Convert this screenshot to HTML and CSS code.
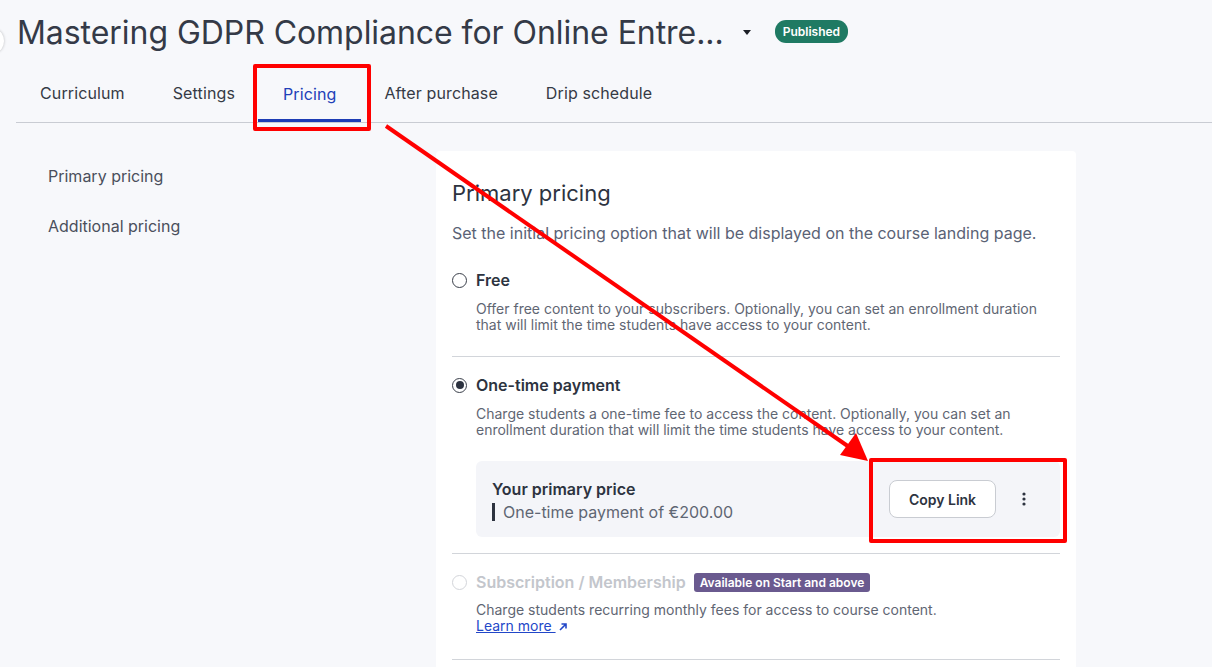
FILE: index.html
```html
<!DOCTYPE html>
<html lang="en">
<head>
  <meta charset="UTF-8">
  <meta name="viewport" content="width=device-width, initial-scale=1.0">
  <title>Pricing</title>
  <link rel="stylesheet" href="styles.css">
</head>
<body>
  <div class="side-toggle"></div>

  <div class="page-header">
    <h1 class="course-title">Mastering GDPR Compliance for Online Entre...</h1>
    <span class="caret"></span>
    <span class="status-badge">Published</span>
  </div>

  <nav class="tabs">
    <a class="tab">Curriculum</a>
    <a class="tab">Settings</a>
    <a class="tab active">Pricing</a>
    <a class="tab">After purchase</a>
    <a class="tab">Drip schedule</a>
  </nav>

  <div class="layout">
    <aside class="side-nav">
      <a class="side-link">Primary pricing</a>
      <a class="side-link">Additional pricing</a>
    </aside>

    <section class="card">
      <h2 class="card-title">Primary pricing</h2>
      <p class="card-subtitle">Set the initial pricing option that will be displayed on the course landing page.</p>

      <div class="option">
        <label class="option-label">
          <span class="radio"></span>
          <span>Free</span>
        </label>
        <p class="option-desc">Offer free content to your subscribers. Optionally, you can set an enrollment duration that will limit the time students have access to your content.</p>
      </div>

      <div class="option">
        <label class="option-label">
          <span class="radio checked"></span>
          <span>One-time payment</span>
        </label>
        <p class="option-desc">Charge students a one-time fee to access the content. Optionally, you can set an enrollment duration that will limit the time students have access to your content.</p>
        <div class="price-box">
          <div class="price-info">
            <div class="price-title">Your primary price</div>
            <div class="price-value">One-time payment of €200.00</div>
          </div>
          <button class="copy-btn">Copy Link</button>
          <span class="kebab">
            <svg width="4" height="14" viewBox="0 0 4 14"><circle cx="2" cy="2" r="1.6" fill="#2d3340"/><circle cx="2" cy="7" r="1.6" fill="#2d3340"/><circle cx="2" cy="12" r="1.6" fill="#2d3340"/></svg>
          </span>
        </div>
      </div>

      <div class="option">
        <label class="option-label disabled">
          <span class="radio"></span>
          <span>Subscription / Membership</span>
          <span class="plan-badge">Available on Start and above</span>
        </label>
        <p class="option-desc">Charge students recurring monthly fees for access to course content.<br>
          <a class="learn-more">Learn more </a><svg class="ext" width="10" height="10" viewBox="0 0 10 10"><path d="M2 8 L8 2 M3.5 2 H8 V6.5" stroke="#2247c8" stroke-width="1.6" fill="none"/></svg>
        </p>
      </div>
    </section>
  </div>

  <!-- annotation overlay -->
  <div class="mark mark-tab"></div>
  <div class="mark mark-copy"></div>
  <svg class="arrow" width="1212" height="667" viewBox="0 0 1212 667">
    <line x1="386" y1="126" x2="852" y2="449" stroke="#ff0000" stroke-width="4"/>
    <polygon points="868,461 840,455 856,433" fill="#ff0000"/>
  </svg>
</body>
</html>
```

FILE: styles.css
```css
body {
  margin: 0;
  font-family: Inter, "Noto Sans", sans-serif;
  background-color: #f7f8fb;
  color: #2d3340;
  height: 667px;
  overflow: hidden;
  position: relative;
}
.side-toggle {
  position: absolute;
  left: -12px;
  top: 30px;
  width: 16px;
  height: 22px;
  border-radius: 50%;
  background: #fff;
  box-shadow: 0 0 3px rgba(0, 0, 0, 0.25);
}
.page-header {
  display: flex;
  align-items: center;
  height: 64px;
  padding-left: 17px;
}
.course-title {
  margin: 0;
  font-size: 32px;
  font-weight: 400;
  color: #343a47;
  letter-spacing: -0.05px;
}
.caret {
  margin-left: 19px;
  width: 0;
  height: 0;
  border-left: 4px solid transparent;
  border-right: 4px solid transparent;
  border-top: 5px solid #1c1f26;
}
.status-badge {
  margin-left: 24px;
  background: #1f7a63;
  color: #fff;
  font-size: 12px;
  font-weight: 600;
  padding: 4px 8px;
  border-radius: 11px;
  margin-top: -2px;
}
.tabs {
  display: flex;
  margin-left: 16px;
  border-bottom: 1px solid #c9ccd3;
  height: 58px;
}
.tab {
  padding: 0 24px 0;
  font-size: 16px;
  letter-spacing: 0.12px;
  color: #353a45;
  display: flex;
  align-items: center;
  box-sizing: border-box;
}
.tab.active {
  color: #2140b8;
  border-bottom: 3px solid #1d3db5;
  padding: 4px 25px 0;
  margin: 0 -1px;
}
.layout {
  display: flex;
  padding-top: 28px;
}
.side-nav {
  width: 388px;
  padding-left: 48px;
  display: flex;
  flex-direction: column;
}
.side-link {
  font-size: 16px;
  color: #4a4f5c;
  height: 50px;
  line-height: 50px;
}
.card {
  width: 608px;
  background: #fff;
  border-radius: 4px;
  padding: 27px 16px 0;
  height: 520px;
}
.card-title {
  margin: 0;
  font-size: 22px;
  font-weight: 400;
  color: #2d3340;
  line-height: 30px;
}
.card-subtitle {
  margin: 15px 0 0;
  font-size: 16px;
  color: #5a6275;
  line-height: 20px;
}
.option {
  border-bottom: 1px solid #d2d5da;
  padding: 18px 0 23px;
}
.option:first-of-type {
  padding-top: 27px;
}
.option:last-of-type {
  padding-bottom: 25px;
}
.option:last-of-type .option-desc {
  margin-top: 10px;
}
.option-label {
  display: flex;
  align-items: center;
  gap: 9px;
  font-size: 16px;
  font-weight: 600;
  color: #2d3340;
  line-height: 20px;
}
.option-label.disabled {
  color: #c3c6cc;
}
.radio {
  width: 13px;
  height: 13px;
  border: 1.5px solid #3a3f4a;
  border-radius: 50%;
  background: #fff;
  position: relative;
}
.radio.checked::after {
  content: "";
  position: absolute;
  left: 2.5px;
  top: 2.5px;
  width: 8px;
  height: 8px;
  border-radius: 50%;
  background: #2d3340;
}
.disabled .radio {
  border-color: #d3d5da;
}
.plan-badge {
  margin-left: -1px;
  background: #6a5a8f;
  color: #fff;
  font-size: 12px;
  font-weight: 600;
  padding: 2px 6px;
  border-radius: 3px;
  line-height: 15px;
}
.option-desc {
  margin: 11px 0 0 24px;
  font-size: 14px;
  line-height: 16px;
  color: #5f6673;
}
.learn-more {
  color: #2247c8;
  text-decoration: underline;
}
.ext {
  margin-left: 2px;
  vertical-align: -1px;
}
.price-box {
  margin: 23px 0 -7px 24px;
  background: #f4f5f9;
  border-radius: 6px;
  height: 76px;
  display: flex;
  align-items: center;
  padding: 0 34px 0 16px;
}
.price-info {
  flex: 1;
}
.price-title {
  font-size: 16px;
  font-weight: 600;
  color: #2d3340;
  line-height: 22px;
}
.price-value {
  margin-top: 3px;
  border-left: 3px solid #2d3340;
  padding-left: 8px;
  font-size: 16px;
  color: #5f6673;
  line-height: 18px;
}
.copy-btn {
  width: 107px;
  height: 38px;
  background: #fff;
  border: 1px solid #c9ccd2;
  border-radius: 8px;
  font-family: inherit;
  font-size: 14px;
  font-weight: 600;
  color: #2d3340;
}
.kebab {
  margin-left: 26px;
  display: flex;
}
.mark {
  position: absolute;
  border: 4px solid #ff0000;
  border-radius: 2px;
}
.mark-tab {
  left: 253px;
  top: 64px;
  width: 110px;
  height: 59px;
}
.mark-copy {
  left: 869px;
  top: 458px;
  width: 190px;
  height: 77px;
}
.arrow {
  position: absolute;
  left: 0;
  top: 0;
}
```
